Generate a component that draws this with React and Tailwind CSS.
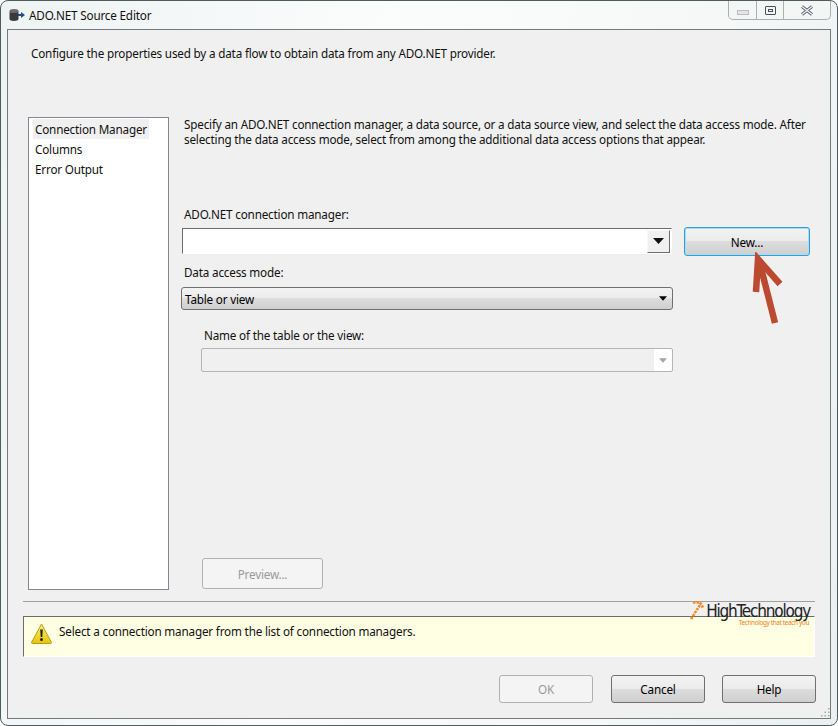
const btn = 'flex items-center justify-center h-[28px] w-[94px] rounded-[3px] border border-[#707070] bg-[linear-gradient(#f3f3f3_0%,#ebebeb_48%,#dddddd_50%,#cfcfcf_100%)] text-black';
const btnOff = 'flex items-center justify-center rounded-[3px] border border-[#adb2b5] bg-[#f4f4f4] text-[#9a9a9a]';

function Caret({ className = '' }) {
  return (
    <svg width="11" height="6" viewBox="0 0 11 6" className={className}>
      <path d="M0 0h11L5.5 6z" fill="currentColor" />
    </svg>
  );
}

function TitleIcon() {
  return (
    <svg width="16" height="14" viewBox="0 0 16 14">
      <ellipse cx="5" cy="3" rx="4.5" ry="2" fill="#6b6b6b" />
      <path d="M.5 3v8c0 1.2 2 2 4.500 2s4.500-.8 4.500-2V3c0 1.200-2 2-4.500 2S.5 4.200.5 3z" fill="#3a3a3a" />
      <path d="M9 6h3V4l4 3-4 3V8H9z" fill="#1f4f86" />
    </svg>
  );
}

function WarningIcon() {
  return (
    <svg width="21" height="21" viewBox="0 0 21 21">
      <defs>
        <linearGradient id="warn" x1="0" y1="0" x2="0" y2="1">
          <stop offset="0" stopColor="#fff27a" />
          <stop offset="1" stopColor="#e8c400" />
        </linearGradient>
      </defs>
      <path d="M10.500 1 20.500 19.500q0 1-1 1h-18q-1 0-1-1z" fill="url(#warn)" stroke="#b89a20" strokeWidth="1" />
      <path d="M9.200 6.500h2.600l-.5 7.500H9.700z" fill="#222" />
      <circle cx="10.500" cy="16.500" r="1.500" fill="#222" />
    </svg>
  );
}

export default function App() {
  return (
    <div className="relative w-[838px] h-[726px] bg-white text-[11.7px] tracking-[-0.18px] leading-[16px] text-[#111] font-['Noto_Sans',sans-serif] overflow-hidden">
      <div className="flex flex-col h-full rounded-[8px] border border-[#4f5c5c] bg-[linear-gradient(100deg,#eef3f4_0%,#fbfcfc_40%,#f6f8f8_75%,#eaf0f0_100%)]">
        {/* Title bar */}
        <div className="flex justify-between h-[28px] pl-[8px] pr-[6px]">
          <div className="flex items-center gap-[4px] h-[27px]">
            <TitleIcon />
            <span>ADO.NET Source Editor</span>
          </div>
          <div className="flex h-[19px] w-[103px] rounded-b-[5px] border border-t-0 border-[#a9b0b2] bg-[#f4f6f6]">
            <div className="flex items-center justify-center w-[28px] border-r border-[#a9b0b2]">
              <div className="w-[12px] h-[5px] mt-[4px] border border-[#b8bcc0] bg-[#e4e6e8]" />
            </div>
            <div className="flex items-center justify-center w-[27px] border-r border-[#a9b0b2]">
              <div className="flex items-center justify-center w-[11px] h-[9px] rounded-[1px] border border-[#4a4f5c]">
                <div className="w-[5px] h-[3px] border border-[#4a4f5c]" />
              </div>
            </div>
            <div className="flex items-center justify-center flex-1">
              <svg width="14" height="11" viewBox="0 0 14 11">
                <path d="M2 1.500l10 8M12 1.500l-10 8" stroke="#5a6070" strokeWidth="3" fill="none" />
                <path d="M2 1.500l10 8M12 1.500l-10 8" stroke="#f4f6f6" strokeWidth="1.200" fill="none" />
              </svg>
            </div>
          </div>
        </div>

        {/* Client area */}
        <div className="flex flex-col h-[690px] mx-[6px] border border-[#75797a] bg-[#f0f0f0]">
          <div className="h-[87px] pl-[23px] pt-[15px]">Configure the properties used by a data flow to obtain data from any ADO.NET provider.</div>

          <div className="flex h-[473px] pl-[20px]">
            {/* Page list */}
            <div className="w-[141px] border border-[#828790] bg-white p-[1px] pl-[4px]">
              <div className="w-[116px] h-[20px] pl-[2px] leading-[20px] bg-[#f0f0f0]">Connection Manager</div>
              <div className="h-[20px] pl-[2px] leading-[20px]">Columns</div>
              <div className="h-[20px] pl-[2px] leading-[20px]">Error Output</div>
            </div>

            {/* Options */}
            <div className="flex flex-col flex-1 pl-[12px]">
              <p className="pl-[3px] w-[640px] leading-[15px]">Specify an ADO.NET connection manager, a data source, or a data source view, and select the data access mode. After selecting the data access mode, select from among the additional data access options that appear.</p>

              <div className="pl-[3px] mt-[59px] h-[16px]">ADO.NET connection manager:</div>
              <div className="flex items-start mt-[5px] gap-[12px]">
                <div className="flex justify-end items-center ml-[1px] mt-[1px] w-[490px] h-[26px] border border-[#6d6d6d] border-r-white border-b-white bg-white pr-[1px]">
                  <div className="flex items-center justify-center w-[23px] h-[23px] border border-[#f8f8f8] border-r-[#6d6d6d] border-b-[#6d6d6d] bg-[#f0f0f0]">
                    <Caret />
                  </div>
                </div>
                <div className="flex items-center justify-center w-[126px] h-[29px] rounded-[3px] border border-[#2f9fd8] shadow-[inset_0_0_0_1px_#a8dcf2] bg-[linear-gradient(#f3f3f3_0%,#ebebeb_48%,#dddddd_50%,#cfcfcf_100%)] text-black">New...</div>
              </div>

              <div className="pl-[3px] mt-[8px] h-[16px]">Data access mode:</div>
              <div className="flex items-center justify-between mt-[7px] w-[492px] h-[23px] pl-[3px] pr-[5px] rounded-[3px] border border-[#707070] bg-[linear-gradient(#f3f3f3_0%,#ebebeb_48%,#dddddd_50%,#cfcfcf_100%)] text-black">
                <span>Table or view</span>
                <Caret className="w-[8px] h-[5px]" />
              </div>

              <div className="pl-[23px] mt-[17px] h-[16px]">Name of the table or the view:</div>
              <div className="flex justify-end ml-[20px] mt-[5px] w-[472px] h-[24px] rounded-[2px] border border-[#b5b5b5] bg-[#f0f0f0]">
                <div className="flex items-center justify-center w-[18px] bg-white rounded-r-[2px] text-[#a6a6a6]">
                  <Caret className="w-[8px] h-[5px]" />
                </div>
              </div>

              <div className={`${btnOff} ml-[21px] mt-auto w-[121px] h-[31px] mb-[1px]`}>Preview...</div>
            </div>
          </div>

          <div className="mx-[15px] mt-[11px] h-[1px] bg-[#a0a0a0]" />

          {/* Status message */}
          <div className="relative flex gap-[7px] mx-[15px] mt-[14px] h-[41px] pt-[6px] pl-[7px] border border-[#6d6d6d] border-r-white border-b-white bg-[#ffffe3]">
            <WarningIcon />
            <span>Select a connection manager from the list of connection managers.</span>
            {/* Watermark */}
            <div className="absolute right-[4px] -top-[16px] flex flex-col items-end">
              <div className="flex items-end">
                <svg width="16" height="19" viewBox="0 0 16 19" className="mr-[1px] -mb-[1px]">
                  <path d="M2 18 11 4" stroke="#f28a2a" strokeWidth="2.500" strokeDasharray="2.500 1" fill="none" />
                  <path d="M4 1.500h7l3 5" stroke="#f28a2a" strokeWidth="2.500" strokeDasharray="2.500 1" fill="none" />
                </svg>
                <span className="text-[17px] leading-[16px] text-[#222] font-['DejaVu_Sans_Condensed','DejaVu_Sans',sans-serif] tracking-[-1.2px]">HighTechnology</span>
              </div>
              <span className="mr-[1px] text-[6.5px] leading-[8px] text-[#f2801f] tracking-[-0.4px]">Technology that teach you</span>
            </div>
          </div>

          {/* Dialog buttons */}
          <div className="flex justify-end mt-[18px] pr-[14px]">
            <div className={`${btnOff} w-[94px] h-[28px]`}>OK</div>
            <div className={`${btn} ml-[18px]`}>Cancel</div>
            <div className={`${btn} ml-[17px]`}>Help</div>
          </div>
        </div>
      </div>

      {/* Red annotation arrow */}
      <svg width="40" height="76" viewBox="0 0 40 76" className="absolute left-[745px] top-[252px]">
        <path d="M30 71 14 8" stroke="#bc4a30" strokeWidth="6.5" fill="none" />
        <path d="M11 40 13 7 35 32" stroke="#bc4a30" strokeWidth="6.5" fill="none" />
      </svg>

      {/* Resize grip */}
      <svg width="10" height="10" viewBox="0 0 10 10" className="absolute left-[820px] top-[708px]">
        <path d="M8 0h1.500v1.500H8zM4.500 3.500H6V5H4.500zM8 3.500h1.500V5H8zM1 7h1.500v1.500H1zM4.500 7H6v1.500H4.500zM8 7h1.500v1.500H8z" fill="#a8acac" />
      </svg>
    </div>
  );
}
